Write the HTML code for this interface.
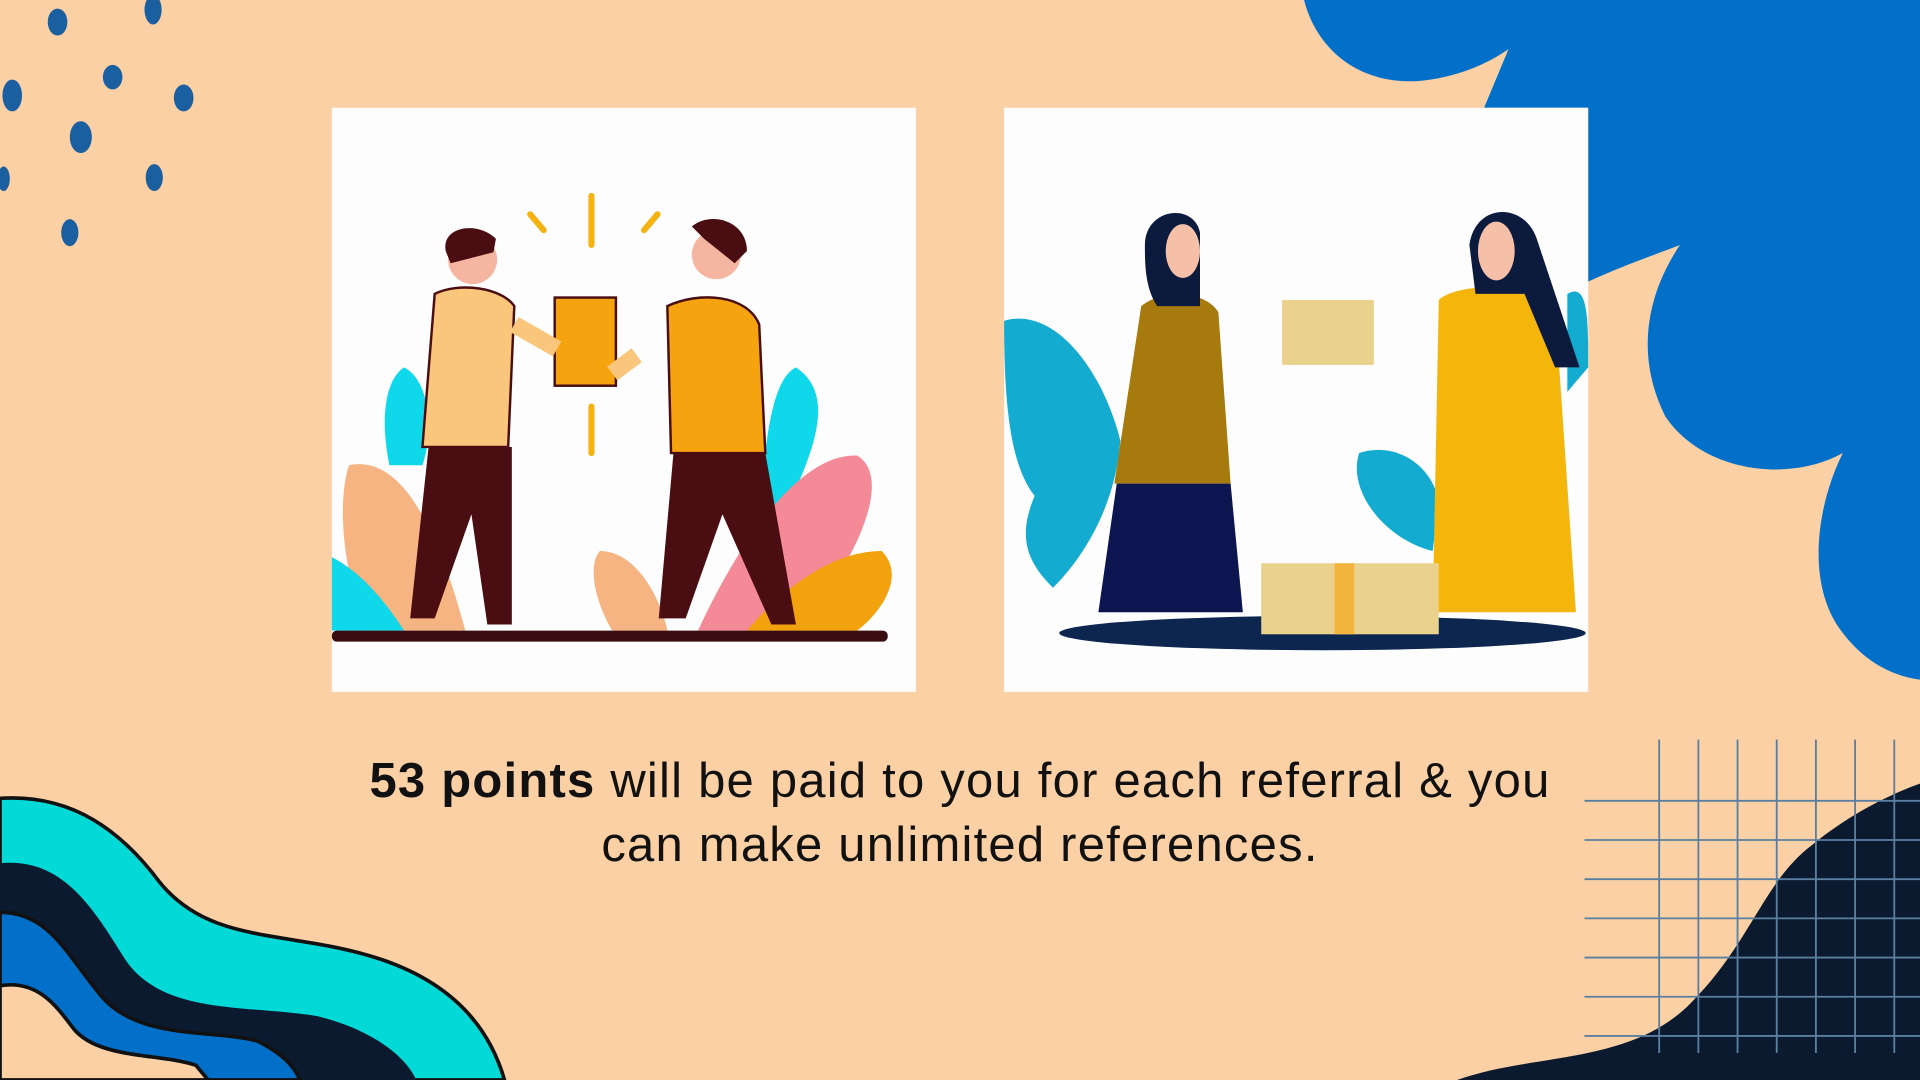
<!DOCTYPE html>
<html><head><meta charset="utf-8"><style>
html,body{margin:0;padding:0;width:1920px;height:1080px;overflow:hidden;background:#fbd0a4}
#s{position:absolute;left:0;top:0;width:1568px;height:882px;transform:scale(1.22449);transform-origin:0 0;background:#fbd0a4;overflow:hidden}
.t{position:absolute;left:200px;width:1168px;text-align:center;font-family:"Liberation Sans",sans-serif;font-size:40px;line-height:52px;color:#111;top:612px;letter-spacing:1px}
</style></head><body><div id="s">
<svg width="1568" height="882" style="position:absolute;left:0;top:0">
<path d="M1065 0 C1075 40 1110 70 1160 66 C1200 62 1225 45 1232 40 L1212 88 L1297 88 L1297 230 C1330 215 1360 205 1372 200 C1345 240 1335 290 1360 340 C1390 385 1460 395 1505 370 C1485 410 1475 470 1500 510 C1520 540 1545 552 1568 555 L1568 0 Z" fill="#0270c9"/>
<path d="M1190 882 C1250 860 1330 870 1380 820 C1430 770 1440 720 1480 690 C1510 665 1545 648 1568 640 L1568 882 Z" fill="#0b1a2e"/>
<g stroke="#5a7fa0" stroke-width="1.5">
<line x1="1355" y1="604" x2="1355" y2="860"/><line x1="1387" y1="604" x2="1387" y2="860"/><line x1="1419" y1="604" x2="1419" y2="860"/><line x1="1451" y1="604" x2="1451" y2="860"/><line x1="1483" y1="604" x2="1483" y2="860"/><line x1="1515" y1="604" x2="1515" y2="860"/><line x1="1547" y1="604" x2="1547" y2="860"/>
<line x1="1294" y1="654" x2="1568" y2="654"/><line x1="1294" y1="686" x2="1568" y2="686"/><line x1="1294" y1="718" x2="1568" y2="718"/><line x1="1294" y1="750" x2="1568" y2="750"/><line x1="1294" y1="782" x2="1568" y2="782"/><line x1="1294" y1="814" x2="1568" y2="814"/><line x1="1294" y1="846" x2="1568" y2="846"/>
</g>
<path d="M0 652 C60 648 100 680 130 720 C170 770 230 760 300 780 C370 800 400 840 412 882 L0 882 Z" fill="#03d9d6" stroke="#111" stroke-width="3"/>
<path d="M0 705 C50 700 75 740 100 780 C130 830 200 820 260 830 C300 840 330 860 340 882 L0 882 Z" fill="#0b1a2e"/>
<path d="M0 745 C40 745 55 780 80 810 C110 850 170 840 210 850 C230 860 240 870 245 882 L0 882 Z" fill="#0270c9" stroke="#111" stroke-width="3"/>
<path d="M0 805 C30 800 45 820 60 840 C80 865 130 860 160 870 L170 882 L0 882 Z" fill="#fbd0a4" stroke="#111" stroke-width="3"/>
<g fill="#1a5fa0">
<ellipse cx="47" cy="18" rx="8" ry="11"/><ellipse cx="125" cy="8" rx="7" ry="12"/><ellipse cx="10" cy="78" rx="8" ry="13"/><ellipse cx="92" cy="63" rx="8" ry="10"/><ellipse cx="150" cy="80" rx="8" ry="11"/><ellipse cx="66" cy="112" rx="9" ry="13"/><ellipse cx="126" cy="145" rx="7" ry="11"/><ellipse cx="3" cy="146" rx="5" ry="10"/><ellipse cx="57" cy="190" rx="7" ry="11"/>
</g>
<rect x="271" y="88" width="477" height="477" fill="#fdfdfd"/>
<path d="M330 300 C350 310 355 350 345 380 L318 380 C310 340 315 310 330 300Z" fill="#0fd8ea"/>
<path d="M285 380 C330 370 360 440 380 515 L300 515 C280 470 275 410 285 380Z" fill="#f6b483"/>
<path d="M271 455 C300 470 320 500 330 515 L271 515Z" fill="#0fd8ea"/>
<path d="M650 300 C680 320 670 360 640 420 L620 420 C625 360 630 310 650 300Z" fill="#0fd8ea"/>
<path d="M700 372 C730 390 700 460 650 515 L570 515 C600 450 650 370 700 372Z" fill="#f48a98"/>
<path d="M490 450 C520 450 540 490 545 515 L500 515 C485 490 480 460 490 450Z" fill="#f6b483"/>
<path d="M720 450 C740 470 720 500 700 515 L610 515 C640 480 680 450 720 450Z" fill="#f2a20c"/>
<path d="M355 240 C375 230 410 235 420 250 L415 365 L345 365 Z" fill="#fac67c" stroke="#4a0d12" stroke-width="2"/>
<path d="M350 365 L418 365 L418 510 L398 510 L385 420 L355 505 L335 505 Z" fill="#4a0d12"/>
<circle cx="386" cy="212" r="20" fill="#f6b5a1"/><path d="M364 205 C360 185 390 180 405 195 L403 206 L368 215Z" fill="#4a0d12"/>
<path d="M545 250 C570 238 610 240 620 265 L625 370 L548 370 Z" fill="#f5a30e" stroke="#4a0d12" stroke-width="2"/>
<path d="M550 370 L625 370 L650 510 L630 510 L590 420 L560 505 L538 505 Z" fill="#4a0d12"/>
<circle cx="585" cy="208" r="20" fill="#f6b5a1"/><path d="M565 185 C580 172 610 180 610 205 L600 215 L575 195Z" fill="#4a0d12"/>
<rect x="453" y="243" width="50" height="72" fill="#f5a30e" stroke="#4a0d12" stroke-width="2"/>
<path d="M420 265 L455 285 M520 290 L500 305" stroke="#fac67c" stroke-width="14"/>
<g stroke="#f5b312" stroke-width="5" stroke-linecap="round"><line x1="483" y1="160" x2="483" y2="200"/><line x1="433" y1="175" x2="444" y2="188"/><line x1="537" y1="175" x2="526" y2="188"/><line x1="483" y1="332" x2="483" y2="370"/></g>
<rect x="271" y="515" width="454" height="9" rx="4" fill="#3a0d10"/>
<rect x="820" y="88" width="477" height="477" fill="#fdfdfd"/>
<path d="M820 262 C860 250 900 300 915 360 C910 420 880 460 860 480 C840 460 830 440 845 405 C825 380 820 330 820 262Z" fill="#13acd0"/>
<path d="M1110 370 C1140 360 1170 380 1175 410 L1170 450 C1130 440 1100 400 1110 370Z" fill="#13acd0"/>
<path d="M1280 240 C1297 230 1297 260 1297 300 L1280 320Z" fill="#13acd0"/>
<ellipse cx="1080" cy="517" rx="215" ry="14" fill="#0c2650"/>
<path d="M932 250 C950 235 985 238 995 255 L1005 395 L910 395 Z" fill="#a67a0c"/>
<path d="M912 395 L1005 395 L1015 500 L897 500 Z" fill="#0c1550"/>
<path d="M935 200 C935 170 975 165 980 190 L980 250 L945 250 C935 235 935 215 935 200Z" fill="#0c1a3e"/><ellipse cx="966" cy="205" rx="14" ry="22" fill="#f6c0a8"/>
<path d="M1175 245 C1190 230 1260 230 1270 250 L1287 500 L1170 500 Z" fill="#f5b60c"/>
<path d="M1200 200 C1205 165 1245 165 1255 195 L1290 300 L1270 300 L1245 240 L1205 240Z" fill="#0c1a3e"/><ellipse cx="1222" cy="205" rx="15" ry="24" fill="#f6c0a8"/>
<rect x="1047" y="245" width="75" height="53" fill="#ead28c"/>
<rect x="1030" y="460" width="145" height="58" fill="#ead28c"/><rect x="1090" y="460" width="16" height="58" fill="#f2b43c"/>
</svg>
<div class="t"><b>53 points</b> will be paid to you for each referral &amp; you<br>can make unlimited references.</div>
</div></body></html>
